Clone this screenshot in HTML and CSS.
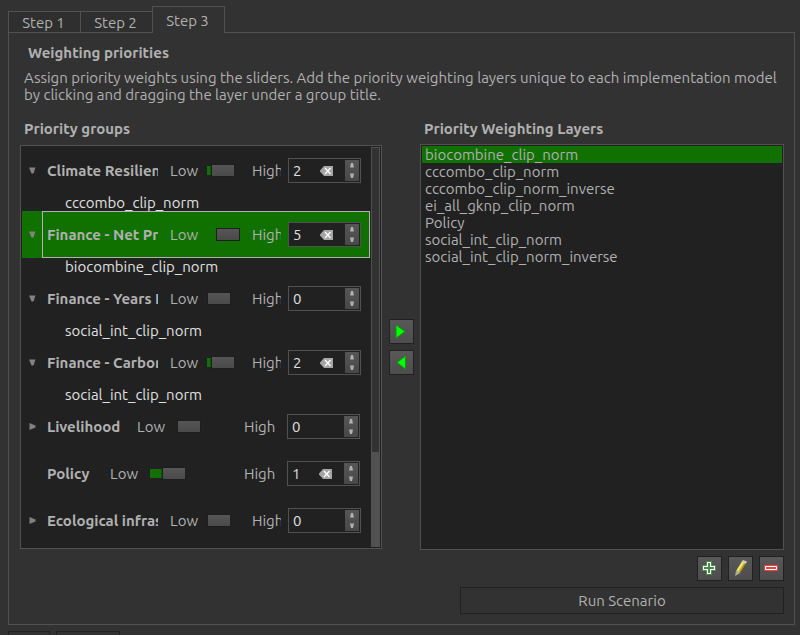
FILE: index.html
```html
<!DOCTYPE html>
<html lang="en">
<head>
<meta charset="utf-8">
<title>Weighting priorities</title>
<link rel="stylesheet" href="styles.css">
</head>
<body>
<svg class="defs" aria-hidden="true">
  <symbol id="clear" viewBox="0 0 13 10"><path d="M4 0h9v10H4L0 5.500v-1z" fill="#a6a6a6"/><path d="M5 2l5.500 6M10.500 2L5 8" stroke="#fff" stroke-width="1.300"/></symbol>
  <symbol id="up" viewBox="0 0 6 5"><path d="M2 0h2l1 4.500h-4z" fill="#b1b1b1"/></symbol>
  <symbol id="down" viewBox="0 0 6 5"><path d="M2 5h2l1-4.500h-4z" fill="#b1b1b1"/></symbol>
  <symbol id="open" viewBox="0 0 7 7"><path d="M0 0.500h6.500L4.500 6.500h-2z" fill="#818181"/></symbol>
  <symbol id="closed" viewBox="0 0 7 7"><path d="M0.500 0v7L6.500 4.500v-2z" fill="#818181"/></symbol>
</svg>
<nav class="tabs" role="tablist">
  <button class="tab" role="tab">Step 1</button>
  <button class="tab" role="tab">Step 2</button>
  <button class="tab tab-active" role="tab" aria-selected="true">Step 3</button>
</nav>
<main class="panel">
  <h1 class="title">Weighting priorities</h1>
  <p class="intro">Assign priority weights using the sliders. Add the priority weighting layers unique to each implementation model by clicking and dragging the layer under a group title.</p>
  <div class="columns">
    <h2 class="heading">Priority groups</h2>
    <h2 class="heading heading-layers">Priority Weighting Layers</h2>
    <section class="tree">
      <div class="groups">
        <div class="group">
          <button class="toggle" aria-label="Collapse"><svg><use href="#open"/></svg></button>
          <div class="body"><span class="name">Climate Resilien</span><label class="low" for="s1">Low</label><input class="slider" id="s1" type="range" min="0" max="5" value="2" style="--fill:2"><label class="high" for="n1">High</label><span class="spin"><input id="n1" type="text" inputmode="numeric" value="2"><button class="clear" aria-label="Clear"><svg><use href="#clear"/></svg></button><span class="steps"><button aria-label="Increase"><svg><use href="#up"/></svg></button><button aria-label="Decrease"><svg><use href="#down"/></svg></button></span></span></div>
        </div>
        <div class="child">cccombo_clip_norm</div>
        <div class="group group-selected">
          <button class="toggle" aria-label="Collapse"><svg><use href="#open"/></svg></button>
          <div class="body"><span class="name">Finance - Net Pr</span><label class="low" for="s2">Low</label><input class="slider" id="s2" type="range" min="0" max="5" value="5" style="--fill:5"><label class="high" for="n2">High</label><span class="spin"><input id="n2" type="text" inputmode="numeric" value="5"><button class="clear" aria-label="Clear"><svg><use href="#clear"/></svg></button><span class="steps"><button aria-label="Increase"><svg><use href="#up"/></svg></button><button aria-label="Decrease"><svg><use href="#down"/></svg></button></span></span></div>
        </div>
        <div class="child">biocombine_clip_norm</div>
        <div class="group">
          <button class="toggle" aria-label="Collapse"><svg><use href="#open"/></svg></button>
          <div class="body"><span class="name">Finance - Years E</span><label class="low" for="s3">Low</label><input class="slider" id="s3" type="range" min="0" max="5" value="0" style="--fill:0"><label class="high" for="n3">High</label><span class="spin"><input id="n3" type="text" inputmode="numeric" value="0"><span class="steps"><button aria-label="Increase"><svg><use href="#up"/></svg></button><button aria-label="Decrease"><svg><use href="#down"/></svg></button></span></span></div>
        </div>
        <div class="child">social_int_clip_norm</div>
        <div class="group">
          <button class="toggle" aria-label="Collapse"><svg><use href="#open"/></svg></button>
          <div class="body"><span class="name">Finance - Carbon</span><label class="low" for="s4">Low</label><input class="slider" id="s4" type="range" min="0" max="5" value="2" style="--fill:2"><label class="high" for="n4">High</label><span class="spin"><input id="n4" type="text" inputmode="numeric" value="2"><button class="clear" aria-label="Clear"><svg><use href="#clear"/></svg></button><span class="steps"><button aria-label="Increase"><svg><use href="#up"/></svg></button><button aria-label="Decrease"><svg><use href="#down"/></svg></button></span></span></div>
        </div>
        <div class="child">social_int_clip_norm</div>
        <div class="group">
          <button class="toggle" aria-label="Expand"><svg><use href="#closed"/></svg></button>
          <div class="body body-roomy"><span class="name name-medium">Livelihood</span><label class="low" for="s5">Low</label><input class="slider" id="s5" type="range" min="0" max="5" value="0" style="--fill:0"><label class="high" for="n5">High</label><span class="spin"><input id="n5" type="text" inputmode="numeric" value="0"><span class="steps"><button aria-label="Increase"><svg><use href="#up"/></svg></button><button aria-label="Decrease"><svg><use href="#down"/></svg></button></span></span></div>
        </div>
        <div class="group">
          <span class="toggle"></span>
          <div class="body body-roomy"><span class="name name-short">Policy</span><label class="low" for="s6">Low</label><input class="slider" id="s6" type="range" min="0" max="5" value="1" style="--fill:1"><label class="high" for="n6">High</label><span class="spin"><input id="n6" type="text" inputmode="numeric" value="1"><button class="clear" aria-label="Clear"><svg><use href="#clear"/></svg></button><span class="steps"><button aria-label="Increase"><svg><use href="#up"/></svg></button><button aria-label="Decrease"><svg><use href="#down"/></svg></button></span></span></div>
        </div>
        <div class="group">
          <button class="toggle" aria-label="Expand"><svg><use href="#closed"/></svg></button>
          <div class="body"><span class="name">Ecological infras</span><label class="low" for="s7">Low</label><input class="slider" id="s7" type="range" min="0" max="5" value="0" style="--fill:0"><label class="high" for="n7">High</label><span class="spin"><input id="n7" type="text" inputmode="numeric" value="0"><span class="steps"><button aria-label="Increase"><svg><use href="#up"/></svg></button><button aria-label="Decrease"><svg><use href="#down"/></svg></button></span></span></div>
        </div>
      </div>
      <div class="scrollbar"><div class="scroll-thumb"></div><div class="scroll-rest"></div></div>
    </section>
    <div class="transfer">
      <button class="tool" aria-label="Add to layers"><svg width="24" height="24" viewBox="0 0 24 24"><path d="M6 5v13l9-6.500z" fill="#0f0" stroke="#0a9a0a"/></svg></button>
      <button class="tool" aria-label="Add to group"><svg width="24" height="24" viewBox="0 0 24 24"><path d="M15.500 5v13L7 11.500z" fill="#0f0" stroke="#0a9a0a"/></svg></button>
    </div>
    <ul class="layers">
      <li class="layer layer-selected">biocombine_clip_norm</li>
      <li class="layer">cccombo_clip_norm</li>
      <li class="layer">cccombo_clip_norm_inverse</li>
      <li class="layer">ei_all_gknp_clip_norm</li>
      <li class="layer">Policy</li>
      <li class="layer">social_int_clip_norm</li>
      <li class="layer">social_int_clip_norm_inverse</li>
    </ul>
  </div>
  <div class="actions">
    <button class="tool" aria-label="Add"><svg width="24" height="24" viewBox="0 0 24 24"><path d="M8.500 4.500h5v4h4v5h-4v4h-5v-4h-4v-5h4z" fill="#fff" stroke="#4b8a4b"/><path d="M10 6h2v4h4v2h-4v4h-2v-4H6v-2h4z" fill="#4b8a4b"/></svg></button>
    <button class="tool" aria-label="Edit"><svg width="24" height="24" viewBox="0 0 24 24"><path d="M7 14l6-10 4 2-6 10-4 2z" fill="#cfc12c"/><path d="M8.500 13.500l6-9" stroke="#f2eb8e" stroke-width="1.500"/><path d="M16 7l-5.500 9" stroke="#82771a"/><path d="M7 14l4 2-5 3z" fill="#aaa"/><path d="M12.500 5l1.500-2 4 1.500-1 2z" fill="#ccc8bd"/></svg></button>
    <button class="tool" aria-label="Remove"><svg width="24" height="24" viewBox="0 0 24 24"><path d="M4 8h14v6H4z" fill="#f04040"/><path d="M5.500 9.500h11v3h-11z" fill="#f04040" stroke="#fff"/></svg></button>
  </div>
  <button class="run">Run Scenario</button>
</main>
<footer class="footer"><button class="foot foot-small" aria-label="Help"></button><button class="foot" aria-label="Options"></button></footer>
</body>
</html>
```
FILE: styles.css
```css
* { box-sizing: border-box; }
body {
  margin: 0;
  height: 100vh;
  padding: 6px 5px 0 8px;
  overflow: hidden;
  display: flex;
  flex-direction: column;
  background: #323232;
  color: #b1b1b1;
  font: 15px/17px Ubuntu, "Noto Sans", sans-serif;
}
button, input { font: inherit; color: inherit; margin: 0; padding: 0; }
button { border: 0; background: none; }
svg { display: block; }
.defs { position: absolute; width: 0; height: 0; }

.tabs { display: flex; align-items: flex-end; flex: none; }
.tab {
  width: 73px;
  height: 21px;
  margin-right: -1px;
  padding: 1px 2px 0 0;
  border: 1px solid #515151;
  border-bottom: 0;
  background: #2f2f2f;
}
.tab-active { height: 27px; margin-bottom: -1px; background: #323232; z-index: 1; }

.panel {
  flex: 1;
  min-height: 0;
  display: flex;
  flex-direction: column;
  padding: 11px 10px 10px 11px;
  border: 1px solid #515151;
}
.title, .heading { margin: 0; font-size: 15px; font-weight: 700; }
.title { padding-left: 8px; }
.intro { margin: 8px 0 17px; padding-left: 4px; }
.columns {
  flex: 1;
  min-height: 0;
  display: grid;
  grid-template: 17px minmax(0, 1fr) / 362fr 24px 364fr;
  gap: 7px;
}
.heading { padding-left: 4px; }
.heading-layers { grid-column: 3; }

.tree {
  display: flex;
  min-width: 0;
  margin: 1px 0;
  padding: 1px;
  border: 1px solid #515151;
  background: #212121;
  overflow: hidden;
}
.groups { flex: 1; min-width: 0; }
.group { display: flex; height: 47px; }
.group-selected { background: #107000; }
.toggle { width: 20px; padding-left: 7px; flex: none; }
.toggle svg { width: 7px; height: 7px; }
.body {
  flex: 1;
  min-width: 0;
  display: flex;
  align-items: center;
  padding: 0 8px 0 4px;
  border: 1px solid transparent;
}
.body-roomy { padding-right: 9px; }
.group-selected .body { border-color: #b1b1b1; }
.name {
  width: 111px;
  margin-right: 12px;
  overflow: hidden;
  white-space: nowrap;
  font-weight: 700;
  flex: none;
}
.name-medium { width: 78px; }
.name-short { width: 51px; }
.low { width: 28px; margin-right: 9px; flex: none; }
.body-roomy .low { margin-right: 12px; }
.high { width: 29px; margin: 0 7px 0 12px; overflow: hidden; flex: none; }
.body-roomy .high { width: 31px; margin-right: 12px; }
.slider {
  appearance: none;
  flex: 1;
  min-width: 0;
  height: 13px;
  background: linear-gradient(#107000, #107000) left center / calc((100% - 24px) * var(--fill) / 5) 9px no-repeat;
}
.slider::-webkit-slider-thumb {
  appearance: none;
  width: 24px;
  height: 13px;
  border: 1px solid #1e1e1e;
  background: linear-gradient(#565656, #4a4a4a);
}
.spin {
  display: flex;
  align-items: center;
  width: 73px;
  height: 25px;
  padding: 1px;
  border: 1px solid #515151;
  background: #212121;
  color: #e0e0e0;
  flex: none;
}
.spin input { flex: 1; min-width: 0; height: 21px; padding-left: 3px; border: 0; background: none; }
.clear { width: 13px; margin-right: 12px; flex: none; }
.clear svg { width: 13px; height: 10px; }
.steps {
  display: flex;
  flex-direction: column;
  justify-content: space-around;
  width: 14px;
  height: 21px;
  background: linear-gradient(#565656, #484848);
  flex: none;
}
.steps button { display: grid; place-items: center; }
.steps svg { width: 6px; height: 5px; }
.child { padding-left: 43px; color: #e0e0e0; }

.scrollbar {
  display: flex;
  flex-direction: column;
  width: 9px;
  margin-left: 1px;
  flex: none;
}
.scroll-thumb { flex: 306; border: 1px solid #515151; background: #323232; }
.scroll-rest { flex: 94; background: #515151; }

.transfer { display: flex; flex-direction: column; justify-content: center; gap: 6px; }
.tool { width: 25px; height: 25px; border: 1px solid #212121; background: linear-gradient(#585858, #4d4d4d); }
.layers {
  margin: 0;
  padding: 1px;
  border: 1px solid #515151;
  background: #212121;
  list-style: none;
}
.layer { padding-left: 3px; }
.layer-selected { background: #107000; }
.actions { display: flex; justify-content: flex-end; gap: 6px; margin: 6px 0; }
.run { height: 27px; width: 324px; align-self: flex-end; border: 1px solid #212121; }

.footer { display: flex; gap: 6px; height: 10px; padding-top: 6px; flex: none; overflow: hidden; }
.foot { width: 64px; height: 25px; border: 1px solid #212121; flex: none; }
.foot-small { width: 42px; }
```
